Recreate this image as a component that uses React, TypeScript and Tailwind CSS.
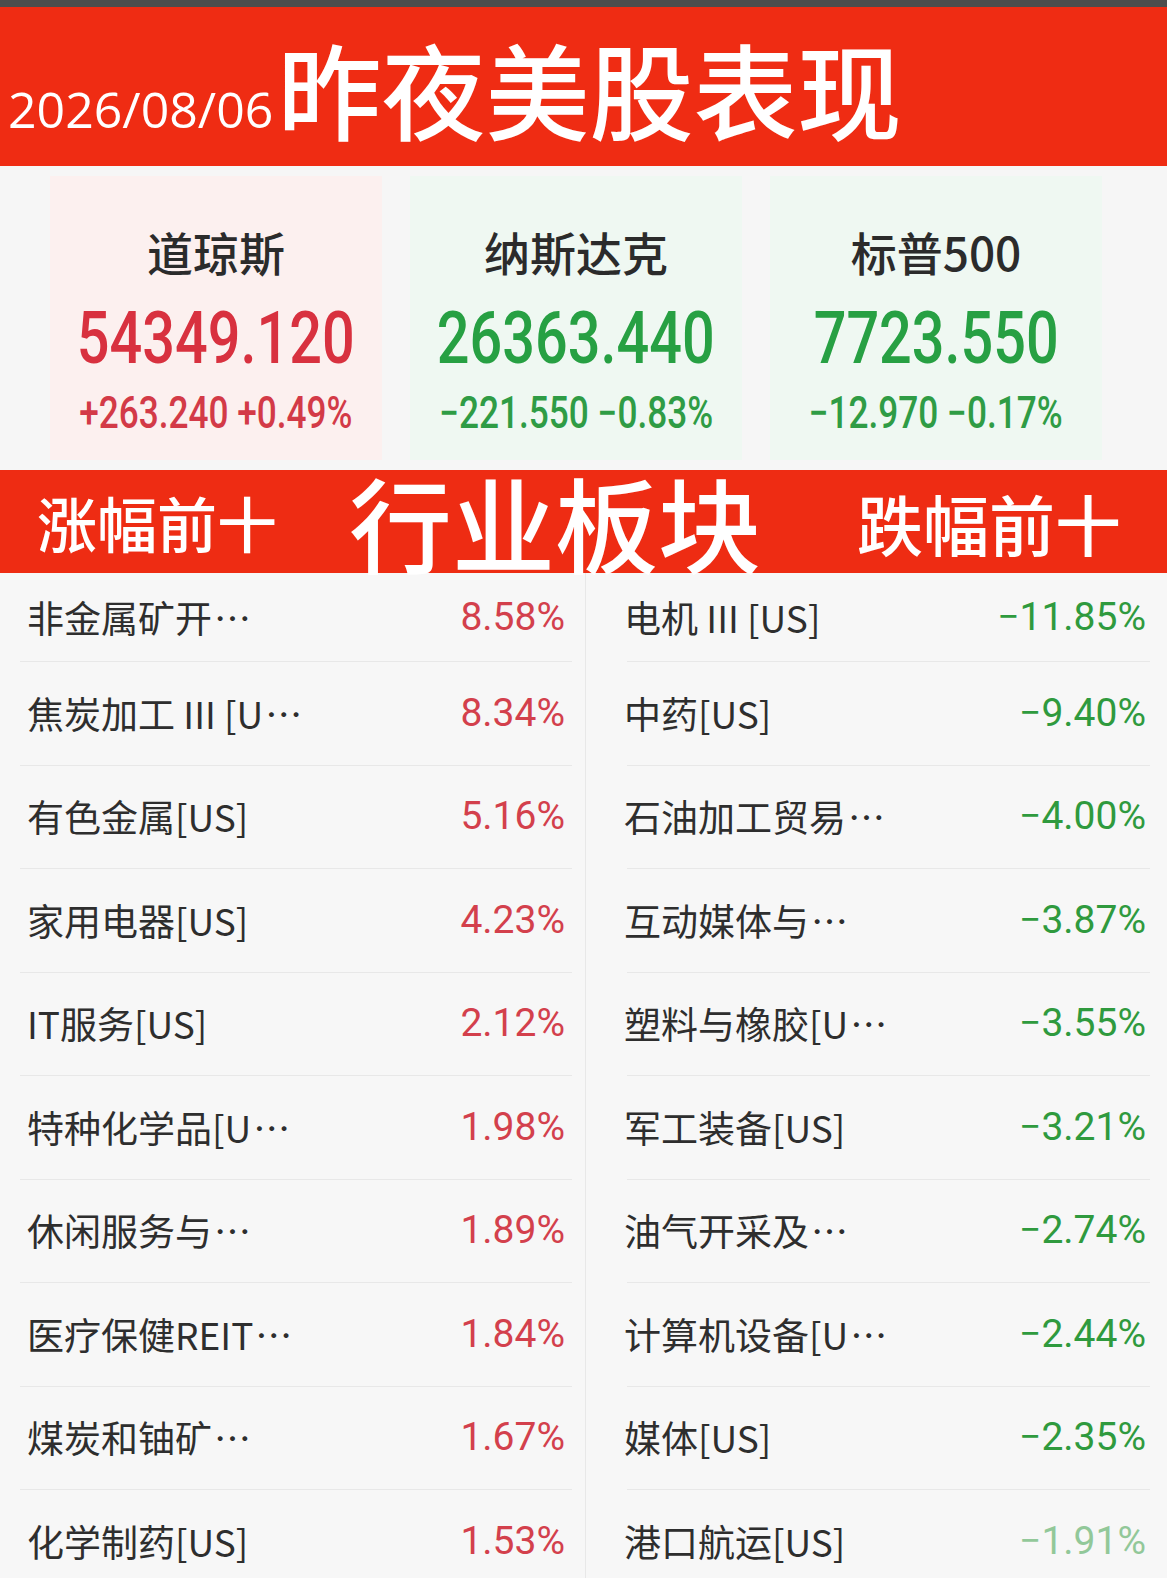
const gainers = [
  { name: '非金属矿开', more: true, pct: '8.58%' },
  { name: '焦炭加工 III [U', more: true, pct: '8.34%' },
  { name: '有色金属[US]', more: false, pct: '5.16%' },
  { name: '家用电器[US]', more: false, pct: '4.23%' },
  { name: 'IT服务[US]', more: false, pct: '2.12%' },
  { name: '特种化学品[U', more: true, pct: '1.98%' },
  { name: '休闲服务与', more: true, pct: '1.89%' },
  { name: '医疗保健REIT', more: true, pct: '1.84%' },
  { name: '煤炭和铀矿', more: true, pct: '1.67%' },
  { name: '化学制药[US]', more: false, pct: '1.53%' },
];

const losers = [
  { name: '电机 III [US]', more: false, pct: '−11.85%' },
  { name: '中药[US]', more: false, pct: '−9.40%' },
  { name: '石油加工贸易', more: true, pct: '−4.00%' },
  { name: '互动媒体与', more: true, pct: '−3.87%' },
  { name: '塑料与橡胶[U', more: true, pct: '−3.55%' },
  { name: '军工装备[US]', more: false, pct: '−3.21%' },
  { name: '油气开采及', more: true, pct: '−2.74%' },
  { name: '计算机设备[U', more: true, pct: '−2.44%' },
  { name: '媒体[US]', more: false, pct: '−2.35%' },
  { name: '港口航运[US]', more: false, pct: '−1.91%' },
];

const indices = [
  { name: '道琼斯', value: '54349.120', change: '+263.240 +0.49%', up: true },
  { name: '纳斯达克', value: '26363.440', change: '−221.550 −0.83%', up: false },
  { name: '标普500', value: '7723.550', change: '−12.970 −0.17%', up: false },
];

function IndexCard({ name, value, change, up }: { name: string; value: string; change: string; up: boolean }) {
  return (
    <div className={`w-[332px] flex flex-col items-center ${up ? 'bg-[#fcf0ef]' : 'bg-[#eff8f2]'}`}>
      <div className="mt-[52px] text-[46px] leading-none font-medium text-[#2b2b2b]">{name}</div>
      <div
        className={`mt-[29px] text-[72px] leading-none font-medium font-['Roboto',sans-serif] scale-x-[0.8] whitespace-nowrap ${
          up ? 'text-[#d8313f]' : 'text-[#27a043]'
        }`}
      >
        {value}
      </div>
      <div
        className={`mt-[16px] text-[44px] leading-none font-medium font-['Roboto',sans-serif] scale-x-[0.8] whitespace-nowrap ${
          up ? 'text-[#d33a47]' : 'text-[#2f9c45]'
        }`}
      >
        {change}
      </div>
    </div>
  );
}

function Row({
  name,
  more,
  pct,
  up,
  first,
  last,
}: {
  name: string;
  more: boolean;
  pct: string;
  up: boolean;
  first: boolean;
  last: boolean;
}) {
  return (
    <div className={`flex flex-col ${first ? 'h-[89px]' : 'h-[103.5px]'}`}>
      <div className={`flex-1 flex items-center justify-between ${up ? 'pl-[27px] pr-[20px]' : 'pl-[38px] pr-[21px]'}`}>
        <span className="text-[37px] leading-none text-[#2e2e2e] whitespace-nowrap">
          {name}
          {more && <span className="inline-block ml-[2px]">⋯</span>}
        </span>
        <span
          className={`text-[39px] leading-none font-['Roboto',sans-serif] ${
            up ? 'text-[#d3404c]' : 'text-[#2f9a3e]'
          } ${last ? 'opacity-50' : ''}`}
        >
          {pct}
        </span>
      </div>
      {!last && <div className={`h-px bg-[#e8e8e8] ${up ? 'ml-[20px] mr-[13px]' : 'ml-[41px] mr-[17px]'}`} />}
    </div>
  );
}

export default function App() {
  return (
    <div className="w-[1167px] h-[1578px] overflow-hidden bg-[#f6f6f6] font-['Noto_Sans_CJK_SC',sans-serif]">
      <div className="h-[7px] bg-[#4d4d4d]" />

      {/* Header */}
      <div className="h-[159px] bg-[#ef2c13] flex items-end pl-[8px] pb-[26px]">
        <span className="text-[50px] leading-none text-white font-['Open_Sans',sans-serif] mb-[6px]">2026/08/06</span>
        <span className="ml-[4px] text-[104px] leading-none text-white font-medium">昨夜美股表现</span>
      </div>

      {/* Index cards */}
      <div className="h-[304px] bg-[#f6f6f6] flex gap-[28px] pl-[50px] py-[10px]">
        {indices.map((i) => (
          <IndexCard key={i.name} {...i} />
        ))}
      </div>

      {/* Sector band */}
      <div className="h-[103px] bg-[#ee2c13] flex items-center text-white">
        <span className="ml-[37px] text-[60px] leading-none font-medium">涨幅前十</span>
        <span className="ml-[72px] text-[103px] leading-none font-medium">行业板块</span>
        <span className="ml-[96px] text-[66px] leading-none font-medium">跌幅前十</span>
      </div>

      {/* Lists */}
      <div className="flex bg-[#f7f7f7]">
        <div className="w-[586px] border-r border-[#e8e8e8]">
          {gainers.map((g, i) => (
            <Row key={g.name} {...g} up first={i === 0} last={false} />
          ))}
        </div>
        <div className="flex-1">
          {losers.map((l, i) => (
            <Row key={l.name} {...l} up={false} first={i === 0} last={i === losers.length - 1} />
          ))}
        </div>
      </div>
    </div>
  );
}
